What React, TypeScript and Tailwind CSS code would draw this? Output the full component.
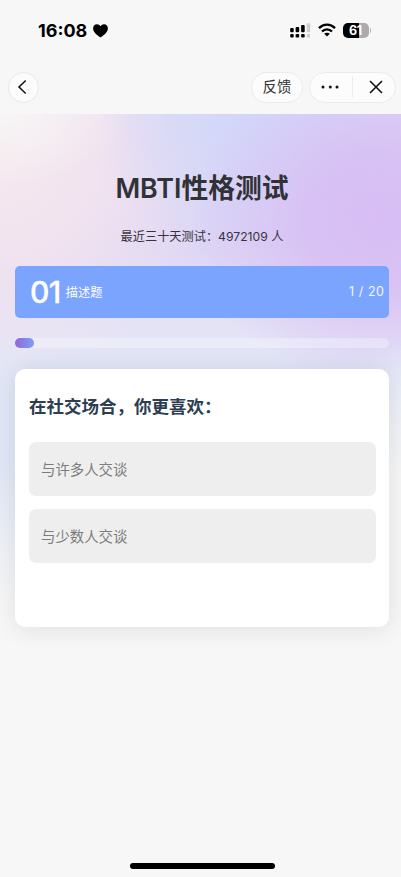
const fontStack = "font-['Inter','Noto_Sans_CJK_SC',sans-serif]";

const options = ["与许多人交谈", "与少数人交谈"];

function Heart() {
  return (
    <svg width="15" height="14" viewBox="0 0 15 14" className="ml-[6px]">
      <path
        d="M7.5 13.4C6.7 12.9 0.1 9.2 0.1 4.5C0.1 1.9 1.7 0.3 3.9 0.3C5.5 0.3 6.8 1.1 7.5 2.2C8.2 1.1 9.5 0.3 11.1 0.3C13.3 0.3 14.9 1.9 14.9 4.5C14.9 9.2 8.3 12.9 7.5 13.4Z"
        fill="#000"
      />
    </svg>
  );
}

function Signal() {
  return (
    <svg width="21" height="15" viewBox="0 0 21 15">
      <g fill="#000">
        <rect x="0.2" y="5" width="3.5" height="4.2" rx="1" />
        <rect x="5.6" y="4" width="3.6" height="5.2" rx="1" />
        <rect x="11.1" y="2" width="3.6" height="7.2" rx="1" />
        <rect x="0.2" y="11" width="3.5" height="3.4" rx="1" />
        <rect x="5.6" y="11" width="3.6" height="3.4" rx="1" />
        <rect x="11.1" y="11" width="3.6" height="3.4" rx="1" />
      </g>
      <g fill="#cfcfcf">
        <rect x="16.7" y="0.2" width="3.5" height="9" rx="1" />
        <rect x="16.7" y="11" width="3.5" height="3.4" rx="1" />
      </g>
    </svg>
  );
}

function Wifi() {
  return (
    <svg width="18" height="14" viewBox="0 0 18 14" className="ml-[7px]">
      <g fill="none" stroke="#000" strokeWidth="2.4">
        <path d="M1 5.1C5.4 0.5 12.6 0.5 17 5.1" />
        <path d="M4 8.5C6.9 5.6 11.1 5.6 14 8.5" />
      </g>
      <path d="M9 13.5L6.2 10.8C7.7 9.4 10.3 9.4 11.8 10.8Z" fill="#000" />
    </svg>
  );
}

function Battery() {
  return (
    <div className="ml-[7px] flex items-center">
      <div className="flex h-[15px] w-[26px] items-center justify-center rounded-[5px] bg-[linear-gradient(90deg,#000_61%,#ababab_61%)] text-[12.5px] font-bold leading-[15px] tracking-[-0.3px] text-white">
        <span className="pt-px">61</span>
      </div>
      <div className="ml-px h-[5px] w-[1.5px] rounded-r-full bg-[#b8b8b8]" />
    </div>
  );
}

export default function App() {
  return (
    <div lang="zh-CN" className={`flex h-[877px] w-[401px] flex-col overflow-hidden bg-[#f7f7f7] ${fontStack}`}>
      <header className="h-[114px] shrink-0">
        <div className="flex h-[60px] items-center justify-between pl-[38px] pr-[30px]">
          <div className="flex items-center pt-px text-[18px] font-bold leading-none text-black">
            16:08
            <Heart />
          </div>
          <div className="flex items-center">
            <Signal />
            <Wifi />
            <Battery />
          </div>
        </div>
        <nav className="flex h-[54px] items-center pl-2 pr-[5px]">
          <button className="flex size-[31px] items-center justify-center rounded-full border border-[#e8e8e8] bg-[#fcfcfc]">
            <svg width="10" height="16" viewBox="0 0 10 16" className="mr-[3px]">
              <path d="M8.7 1.5L2 8L8.7 14.5" fill="none" stroke="#111" strokeWidth="1.5" />
            </svg>
          </button>
          <button className="ml-auto flex h-[31px] w-[52px] items-center justify-center rounded-full border border-[#ebebeb] bg-[#fcfcfc] text-[14.4px] leading-[20px] text-[#333]">
            反馈
          </button>
          <div className="ml-[6px] flex h-[31px] w-[87px] items-center rounded-full border border-[#ebebeb] bg-[#fcfcfc]">
            <button className="flex h-full w-[42px] items-center justify-center pr-[3px]">
              <svg width="18" height="4" viewBox="0 0 18 4" fill="#111">
                <circle cx="2" cy="2" r="1.5" />
                <circle cx="9.3" cy="2" r="1.5" />
                <circle cx="16" cy="2" r="1.5" />
              </svg>
            </button>
            <div className="h-5 w-px bg-[#ececec]" />
            <button className="flex h-full flex-1 items-center justify-center pl-[3px]">
              <svg width="14" height="14" viewBox="0 0 14 14">
                <path d="M1 1L13 13M13 1L1 13" stroke="#111" strokeWidth="1.6" />
              </svg>
            </button>
          </div>
        </nav>
      </header>

      <main className="flex flex-1 flex-col bg-[linear-gradient(162deg,#f7f7f700_340px,#f7f7f7_465px),radial-gradient(ellipse_130px_70px_at_0px_0px,#f7f6f6_0%,#f7f5f500_100%),radial-gradient(ellipse_190px_170px_at_380px_105px,#d7bdf4_0%,#d7bdf4cc_40%,#d7bdf400_100%),radial-gradient(ellipse_150px_130px_at_250px_10px,#d2d8f9_0%,#d2d8f9aa_40%,#d2d8f900_100%),radial-gradient(ellipse_220px_210px_at_0px_50px,#f6e8ee_0%,#f5e5eed0_45%,#f5e5ee00_100%),linear-gradient(180deg,#dcd8f5_0px,#ddd6f5_130px,#e4e3f6_215px,#e1e7f7_260px,#e2e8f6_400px)] px-[15px] pr-[12px]">
        <h1 className="mt-[53px] text-center text-[26.8px] font-semibold leading-[42px] text-[#303236]">
          MBTI性格测试
        </h1>
        <p className="mt-[19px] text-center text-[12.2px] leading-[18px] text-[#38343f]">
          最近三十天测试：4972109 人
        </p>

        <section className="mt-[20px] flex h-[52px] shrink-0 items-center rounded-[5px] bg-[#7ba4ff] pl-[15px] pr-[5px] text-white">
          <span className="text-[30px] font-medium leading-none tracking-[-0.5px] [-webkit-text-stroke:0.3px_white]">01</span>
          <span className="ml-[5px] pt-[2px] text-[12.2px] leading-[18px]">描述题</span>
          <span className="ml-auto text-[12.5px] tracking-[0.2px] [word-spacing:0.8px] text-white/90">1 / 20</span>
        </section>

        <div className="mt-[20px] h-[10px] shrink-0 rounded-full bg-white/30">
          <div className="h-full w-[5%] rounded-full bg-[linear-gradient(90deg,#9367d4,#7a9ff8)]" />
        </div>

        <section className="mt-[21px] h-[258px] shrink-0 rounded-[10px] bg-white px-[14px] pr-[13px] pt-[23px] shadow-[0_2px_24px_rgba(0,0,0,0.10)]">
          <h2 className="text-[17.5px] font-semibold leading-[30px] text-[#2c3e50]">
            在社交场合，你更喜欢：
          </h2>
          <div className="mt-[20px] flex flex-col gap-[13px]">
            {options.map((label) => (
              <button
                key={label}
                className="flex h-[54px] items-center rounded-[7px] bg-[#eeeeee] pl-[12px] pt-[2px] text-left text-[14.4px] text-[#7c7c7c]"
              >
                {label}
              </button>
            ))}
          </div>
        </section>

        <div className="mb-[8px] ml-[115px] mt-auto h-[6px] w-[145px] shrink-0 rounded-full bg-black" />
      </main>
    </div>
  );
}
